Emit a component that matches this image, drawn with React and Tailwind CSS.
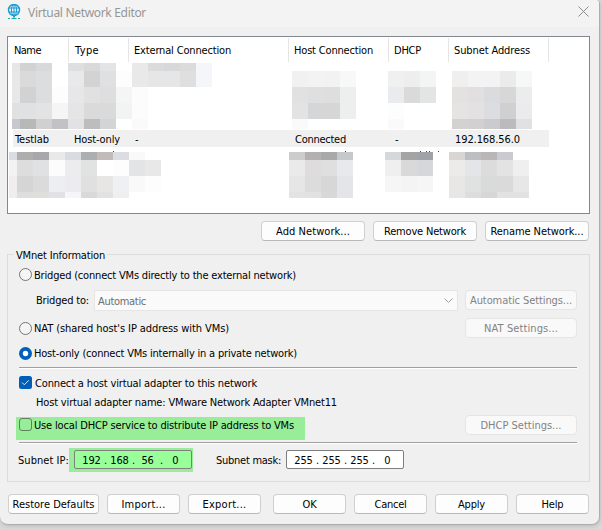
import { useLayoutEffect, useRef } from "react";
import clsx from "clsx";

// A single line of text whose tracking is adjusted to fill a given width.
function T({ w, className, children }) {
  const ref = useRef(null);
  useLayoutEffect(() => {
    const el = ref.current;
    el.style.letterSpacing = "0px";
    const natural = el.getBoundingClientRect().width;
    const n = el.textContent.length;
    if (w && n > 1) el.style.letterSpacing = `${(w - natural) / n}px`;
  }, [w]);
  return (
    <span ref={ref} className={clsx("inline-block shrink-0 translate-y-px whitespace-pre", className)}>
      {children}
    </span>
  );
}

// Rows of blurred-out cells; "-" leaves a cell empty.
function Mosaic({ rows, heights, widths, className }) {
  return (
    <div className={clsx("shrink-0", className)}>
      {rows.map((row, r) => (
        <div key={r} className="flex" style={{ height: heights[r] }}>
          {row.split(" ").map((c, i) => (
            <div
              key={i}
              className="shrink-0"
              style={{ width: widths ? widths[i] : 16, background: c === "-" ? "transparent" : `#${c}` }}
            />
          ))}
        </div>
      ))}
    </div>
  );
}

function Button({ w, className, disabled, children }) {
  return (
    <button
      className={clsx(
        "flex h-5 shrink-0 items-center justify-center rounded-[4px] border",
        disabled
          ? "border-[#e5e5e5] bg-[#f9f9f9] text-[#838383]"
          : "border-[#d0d0d0] border-b-[#b9b9b9] bg-[#fdfdfd]",
        className
      )}
    >
      <T w={w}>{children}</T>
    </button>
  );
}

function Radio({ checked }) {
  return (
    <svg className="shrink-0" width="13" height="13" viewBox="0 0 13 13">
      {checked ? (
        <>
          <circle cx="6.5" cy="6.5" r="6.5" fill="#005fb8" />
          <circle cx="6.5" cy="6.5" r="2.7" fill="#fff" />
        </>
      ) : (
        <circle cx="6.5" cy="6.5" r="6" fill="#f5f5f5" stroke="#757575" />
      )}
    </svg>
  );
}

function Divider() {
  return <div className="ml-[11px] h-[2px] w-[558px] border-t border-b border-t-[#a0a0a0] border-b-white" />;
}

function Globe() {
  return (
    <svg className="shrink-0" width="14" height="16" viewBox="0 0 14 16" fill="none" stroke="#169bd5">
      <circle cx="7" cy="6" r="5.5" strokeWidth="1.4" />
      <ellipse cx="7" cy="6" rx="2.6" ry="5.5" />
      <path d="M1.8 4h10.4M1.8 8h10.4M7 .5v11" />
      <path d="M7 11.5v2" strokeWidth="2" />
      <path d="M1 14.5h2M4.500 14.5h5M11 14.500h2" stroke="#1bb39b" />
    </svg>
  );
}

const COLS = [
  ["Name", 27, "w-[61px] pl-[6px]"],
  ["Type", 24, "w-[60px] pl-[6px]"],
  ["External Connection", 97, "w-[160px] pl-[5px]"],
  ["Host Connection", 79, "w-[100px] pl-[5px]"],
  ["DHCP", 27, "w-[60px] pl-[5px]"],
  ["Subnet Address", 76, "w-[100px] pl-[5px]"],
];

const CELLS = [
  ["Testlab", 34, "w-[59px]"],
  ["Host-only", 46, "w-[61px]"],
  ["-", 4, "w-[160px]"],
  ["Connected", 51, "w-[100px]"],
  ["-", 4, "w-[60px]"],
  ["192.168.56.0", 65, "w-[94px]"],
];

const FIRST = [8, 16, 16, 16, 16, 16, 16, 16, 16, 16, 16, 16, 16];

function NetworkList() {
  return (
    <div className="ml-[7px] mt-[9px] h-[178px] w-[583px] border border-[#828790] bg-white">
      <div className="flex h-[25px] pt-px">
        {COLS.map(([t, w, c]) => (
          <div key={t} className={clsx("flex h-6 items-center border-r border-[#e5e5e5]", c)}>
            <T w={w}>{t}</T>
          </div>
        ))}
      </div>
      <div className="flex h-[68px] items-start pt-px">
        <Mosaic
          className="ml-1"
          widths={FIRST}
          heights={[8, 16, 16, 16, 10]}
          rows={[
            "e6e6e6 d2d2d2 d8d9db - dedfe1 d9d9d9 e3e4e6 - e9e9e9 dbdbdc d7d8da dbdbdb f4f6f9",
            "e8e8e8 dadada dcdddf - e9e9ec d3d3d3 e0e0e2 fdfdfd e9e9e9 e6e6e6 e6e6e6 dfdfdf f4f6f9",
            "e8e8e8 d2d2d2 dcdddf fdfdfd e7e7ea e1e1e1 dedede f5f5f5 fcfcfc",
            "e1e1e1 dfe1e2 e3e3e3 f5f5f5 e5e5e5 dadada dadada f2f4f3 fcfcfc",
            "c6c7cf b8b8b8 cfd0cf c2c1c6 e2e2e4 bdbdbd d3d4d6 - fafafa",
          ]}
        />
        <Mosaic
          className="ml-20 mt-2"
          heights={[16, 16, 16, 10]}
          rows={["f1f1f1 f3f3f3 f2f2f2 f8f8f8", "e1e1e1 dfdfdf dedede edefee", "e3e3e3 d5d6d8 d6d6d6 edefee", "fafafa - - -"]}
        />
        <Mosaic
          className="ml-8 mt-2"
          heights={[16, 16, 16, 10]}
          rows={["f0f0f0 eeeeee f3f5f4", "eaebee dadada e3e5e4", "fdfdfd - -", "fafafa - -"]}
        />
        <Mosaic
          className="ml-4 mt-2"
          heights={[16, 16, 16, 10]}
          rows={[
            "efefef f3f3f3 f3f3f3 ebebeb f6f8f7",
            "e4e2e1 e2dfe0 dadbdc d7d7d7 ececec",
            "e5e4e3 e3e1e2 dcdde0 d0d0d0 ebebee",
            "d3d2d1 d2d0d1 cbcbcd bcbabd e1e1e3",
          ]}
        />
      </div>
      <div className="ml-[5px] flex h-[17px] w-[536px] items-center bg-[#f0f0f0] pl-[2px]">
        {CELLS.map(([t, w, c], i) => (
          <div key={i} className={c}>
            <T w={w} className="align-top">{t}</T>
          </div>
        ))}
      </div>
      <div className="flex h-[5px] items-end">
        <i className="ml-[105px] h-px w-px bg-[#444]" />
        <i className="ml-[231px] h-px w-px bg-[#444]" />
        <i className="ml-[74px] h-px w-px bg-[#444]" />
        <i className="ml-[5px] h-px w-px bg-[#444]" />
        <i className="ml-[2px] h-px w-px bg-[#444]" />
        <i className="ml-[8px] h-px w-px bg-[#444]" />
      </div>
      <div className="flex items-start">
        <Mosaic
          className="ml-px"
          widths={[8, 16, 16, 16, 16, 16, 16, 16, 16, 16]}
          heights={[8, 16, 16, 6]}
          rows={[
            "d9dce5 aeaeae a8a8aa e9e9e9 dadae1 acaeaf c1bcb9 dcdde3 f9f9f9 -",
            "f3f3f3 dddddd e0e1e3 fcfcfc ececef e0e3e1 - fdfdfd e3e4e6 e8e8e8",
            "f0edef d5d5d5 dbdbdb eceef1 ececee e0e0e0 e8e6e4 eff0f3 f9f9f9 fdfdfd",
            "f0edef dedede dfdfdc e1e1e6 f6f6f9 d9d9d9 e2e2e1 eeeff1 - -",
          ]}
        />
        <Mosaic
          className="ml-32"
          heights={[8, 16, 16, 6]}
          rows={["cccccc b4b0b1 a9a9a9 c7c8cc", "eaeaea dedcdd dfdfdf e7e9ec", "e6e6e6 dcdcdc d7d7d7 e3e5e8", "e3e3e3 e2e2e2 d8d8d8 e3e5e8"]}
        />
        <Mosaic
          className="ml-8"
          heights={[8, 16, 16]}
          rows={["d6d7d9 a4a4a5 a1a2a7", "efefef d9d9d9 d6d7da", "f6f6f6 f4f4f4 f6f6f6"]}
        />
        <Mosaic
          className="ml-4"
          heights={[8, 16, 16, 6]}
          rows={[
            "d7d6d4 bdbec1 bab6b6 cacbd1 -",
            "ecebe9 e4e5e8 dcdcdc e3e3e3 efefef",
            "e8e7e5 e0e1e1 d8dbda dadada e7e7e7",
            "e8e7e5 dddddd d8d6d9 e2e2e2 e2e2e4",
          ]}
        />
      </div>
    </div>
  );
}

function IpField({ parts, green }) {
  return (
    <div
      className={clsx(
        "flex h-[19px] w-[118px] shrink-0 items-center rounded-[2px] border border-[#7f7f7f] pl-[7px]",
        green ? "bg-[#99ff99]" : "bg-white"
      )}
    >
      {parts.map((p, i) => (
        <div key={i} className="flex w-[28px] items-center">
          <div className="w-[19px] text-center">
            <T w={p.length * 6.1}>{p}</T>
          </div>
          {i < 3 && <span className="w-[9px] translate-y-px pl-[3px]">.</span>}
        </div>
      ))}
    </div>
  );
}

export default function App() {
  return (
    <div className="h-[530px] w-[602px] overflow-hidden bg-[#d9d9d9] font-['DejaVu_Sans_Condensed','DejaVu_Sans',sans-serif] text-[11px] leading-[14px] text-black [font-stretch:condensed]">
      <div className="h-[525px] w-[600px] overflow-hidden rounded-b-[8px] rounded-tr-[4px] border-r border-b border-[#adadad] bg-[#f0f0f0] shadow-[0_1px_4px_#bbb]">
        <header className="flex h-[27px] items-center bg-[#f3f3f3] pb-[3px] pl-[7px]">
          <Globe />
          <T w={118} className="ml-[7px] font-['Noto_Sans',sans-serif] text-[12px] text-[#969696]">
            Virtual Network Editor
          </T>
          <svg className="ml-auto mr-[10px] mt-[-2px]" width="11" height="11" viewBox="0 0 11 11" stroke="#8c8c8c" fill="none">
            <path d="M.5.5l10 10M10.500.5l-10 10" />
          </svg>
        </header>

        <NetworkList />

        <div className="mt-[7px] flex gap-2 pl-[261px]">
          <Button w={74} className="w-[104px]">Add Network...</Button>
          <Button w={82} className="w-[104px]">Remove Network</Button>
          <Button w={93} className="w-[104px]">Rename Network...</Button>
        </div>

        <section className="ml-[7px] mt-[13px] h-[228px] w-[583px] border border-[#dcdcdc]">
          <div className="-mt-[7px] ml-[6px] flex h-[14px] w-[93px] bg-[#f0f0f0] pl-[2px]">
            <T w={89}>VMnet Information</T>
          </div>
          <div className="mt-[5px] flex h-[15px] items-center gap-[2px] pl-[11px]">
            <Radio />
            <T w={262}>Bridged (connect VMs directly to the external network)</T>
          </div>
          <div className="mt-[8px] flex items-start pl-[28px]">
            <T w={53} className="mt-[3px]">Bridged to:</T>
            <div className="ml-[5px] flex h-[21px] w-[364px] items-center justify-between border border-[#e5e5e5] bg-[#fafafa] pl-[3px] pr-[4px] text-[#6d6d6d]">
              <T w={48}>Automatic</T>
              <svg width="9" height="6" viewBox="0 0 9 6" fill="none" stroke="#a0a0a0">
                <path d="M.5.5l4 4 4-4" />
              </svg>
            </div>
            <Button w={102} disabled className="ml-[7px] w-[112px]">Automatic Settings...</Button>
          </div>
          <div className="mt-[7px] flex h-5 items-center pl-[11px]">
            <Radio />
            <T w={195} className="ml-[2px]">NAT (shared host's IP address with VMs)</T>
            <Button w={74} disabled className="ml-auto mr-[12px] w-[112px]">NAT Settings...</Button>
          </div>
          <div className="mb-[7px] mt-[8px] flex h-[14px] items-center gap-[2px] pl-[11px]">
            <Radio checked />
            <T w={263}>Host-only (connect VMs internally in a private network)</T>
          </div>
          <Divider />
          <div className="mt-[7px] flex h-[13px] items-center gap-[3px] pl-[11px]">
            <svg width="13" height="13" viewBox="0 0 13 13" fill="none">
              <rect width="13" height="13" rx="2.5" fill="#005fb8" />
              <path d="M3 6.500l2.300 2.300 4.500-4.500" stroke="#dbe9f6" />
            </svg>
            <T w={222}>Connect a host virtual adapter to this network</T>
          </div>
          <div className="mt-[6px] flex h-[14px] pl-[28px]">
            <T w={301}>Host virtual adapter name: VMware Network Adapter VMnet11</T>
          </div>
          <div className="mt-[6px] flex h-[25px] items-start">
            <div className="ml-[8px] mt-[2px] flex h-[23px] w-[289px] items-start gap-[2px] bg-[#98ee98] pl-[3px] pt-px">
              <div className="size-[13px] shrink-0 rounded-[3px] border border-[#5f7f5f]" />
              <T w={260}>Use local DHCP service to distribute IP address to VMs</T>
            </div>
            <Button w={81} disabled className="ml-auto mr-[12px] w-[112px]">DHCP Settings...</Button>
          </div>
          <div className="mt-[2px]">
            <Divider />
          </div>
          <div className="mt-[4px] flex h-6 items-center pl-[10px]">
            <T w={51}>Subnet IP:</T>
            <div className="flex h-6 w-[124px] items-start bg-[#98ee98] pl-[5px] pt-[2px]">
              <IpField green parts={["192", "168", "56", "0"]} />
            </div>
            <T w={65} className="ml-[23px]">Subnet mask:</T>
            <div className="ml-[5px] h-5">
              <IpField parts={["255", "255", "255", "0"]} />
            </div>
          </div>
        </section>

        <footer className="mt-[12px] flex gap-2 pl-2">
          <Button w={82} className="w-[91px]">Restore Defaults</Button>
          <Button w={44} className="w-[73px]">Import...</Button>
          <Button w={44} className="w-[73px]">Export...</Button>
          <Button w={14} className="ml-1 w-[73px]">OK</Button>
          <Button w={32} className="w-[73px]">Cancel</Button>
          <Button w={27} className="w-[73px]">Apply</Button>
          <Button w={22} className="w-[73px]">Help</Button>
        </footer>
      </div>
    </div>
  );
}
